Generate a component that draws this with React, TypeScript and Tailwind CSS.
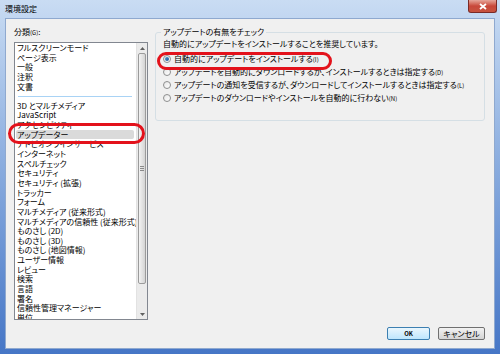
import React from "react";

const categories = [
  "フルスクリーンモード",
  "ページ表示",
  "一般",
  "注釈",
  "文書",
  "---",
  "3D とマルチメディア",
  "JavaScript",
  "アクセシビリティ",
  "アップデーター",
  "アドビオンラインサービス",
  "インターネット",
  "スペルチェック",
  "セキュリティ",
  "セキュリティ (拡張)",
  "トラッカー",
  "フォーム",
  "マルチメディア (従来形式)",
  "マルチメディアの信頼性 (従来形式)",
  "ものさし (2D)",
  "ものさし (3D)",
  "ものさし (地図情報)",
  "ユーザー情報",
  "レビュー",
  "検索",
  "言語",
  "署名",
  "信頼性管理マネージャー",
  "単位",
];

const options = [
  { label: "自動的にアップデートをインストールする", key: "(I)", checked: true },
  { label: "アップデートを自動的にダウンロードするが、インストールするときは指定する", key: "(D)" },
  { label: "アップデートの通知を受信するが、ダウンロードしてインストールするときは指定する", key: "(L)" },
  { label: "アップデートのダウンロードやインストールを自動的に行わない", key: "(N)" },
];

function Radio({ checked }: { checked?: boolean }) {
  return (
    <span className="w-[8px] h-[8px] shrink-0 rounded-full border border-[#8e8f8f] bg-gradient-to-br from-[#e6e6e6] to-[#ffffff] flex items-center justify-center">
      {checked && <span className="w-[4px] h-[4px] rounded-full bg-gradient-to-br from-[#4c9ad6] to-[#1c4f8c]" />}
    </span>
  );
}

function Scrollbar() {
  return (
    <div className="w-[11px] h-full shrink-0 flex flex-col bg-[#ebebeb] border-l border-[#e2e2e2]">
      <div className="h-[10px] flex items-center justify-center">
        <svg width="5" height="3" viewBox="0 0 5 3">
          <path d="M0 3 L2.5 0 L5 3 Z" fill="#606060" />
        </svg>
      </div>
      <div className="mx-[1px] h-[231px] rounded-[2px] border border-[#9b9b9b] bg-gradient-to-r from-[#f3f3f3] to-[#d4d4d4] flex items-center justify-center">
        <div className="flex flex-col gap-[1px]">
          <span className="w-[4px] h-[1px] bg-[#8a8a8a]" />
          <span className="w-[4px] h-[1px] bg-[#8a8a8a]" />
          <span className="w-[4px] h-[1px] bg-[#8a8a8a]" />
        </div>
      </div>
      <div className="flex-1" />
      <div className="h-[10px] flex items-center justify-center">
        <svg width="5" height="3" viewBox="0 0 5 3">
          <path d="M0 0 L2.5 3 L5 0 Z" fill="#606060" />
        </svg>
      </div>
    </div>
  );
}

export default function App() {
  return (
    <div className="relative w-[500px] h-[354px] overflow-hidden flex flex-col bg-gradient-to-b from-[#c9dcf3] via-[#86a9dd] to-[#4676c6] text-black font-['Noto_Sans_CJK_JP','Noto_Sans',sans-serif] [font-feature-settings:'palt'] text-[8px]">
      {/* title bar */}
      <div className="h-[18px] flex justify-between shrink-0">
        <span className="pl-[5px] leading-[18px] text-[8px]">環境設定</span>
        <div className="mr-[3px] w-[29px] h-[13px] rounded-b-[3px] border border-t-0 border-[#7a2a26] bg-gradient-to-b from-[#e5a59a] via-[#c8473a] to-[#c7533f] flex items-center justify-center">
          <svg width="8" height="7" viewBox="0 0 8 7">
            <path d="M1 1 L7 6 M7 1 L1 6" stroke="#ffffff" strokeWidth="1.8" />
          </svg>
        </div>
      </div>

      {/* client area */}
      <div className="flex-1 mx-[5px] mb-[5px] bg-[#f0f0f0] border border-[#8fa9cf] flex flex-col pl-[8px] pr-[9px]">
        <div className="flex items-start gap-[7px]">
          {/* category list */}
          <div className="w-[134px] flex flex-col">
            <span className="pt-[7px] leading-[12px]">
              分類<span className="text-[6px]">(G)</span>:
            </span>
            <div className="mt-[3px] h-[278px] border border-[#828790] bg-white flex overflow-hidden">
              <div className="flex-1 flex flex-col pl-[1px] pr-[2px] overflow-hidden">
                {categories.map((c, i) =>
                  c === "---" ? (
                    <div key={i} className="h-[9.65px] shrink-0 flex items-center px-[2px]">
                      <span className="w-full h-[1px] bg-[#a9d3f5]" />
                    </div>
                  ) : (
                    <div
                      key={i}
                      className={`h-[9.65px] shrink-0 leading-[9.65px] px-[1px] whitespace-nowrap ${
                        c === "アップデーター" ? "bg-[#dadada] rounded-[2px]" : ""
                      }`}
                    >
                      {c}
                    </div>
                  )
                )}
              </div>
              <Scrollbar />
            </div>
          </div>

          {/* update group */}
          <fieldset className="mt-[7px] w-[330px] h-[95px] border border-[#d5dfe5] rounded-[3px] px-[7px]">
            <legend className="px-[2px] -ml-[2px] leading-[12px]">アップデートの有無をチェック</legend>
            <div className="leading-[12px]">自動的にアップデートをインストールすることを推奨しています。</div>
            <div className="mt-[2px] flex flex-col">
              {options.map((o) => (
                <div key={o.key} className="h-[13px] flex items-center gap-[3px] whitespace-nowrap">
                  <Radio checked={o.checked} />
                  <span>
                    {o.label}
                    <span className="text-[6px]">{o.key}</span>
                  </span>
                </div>
              ))}
            </div>
          </fieldset>
        </div>

        <div className="mt-auto mb-[8px] flex justify-end gap-[8px]">
          <button className="w-[43px] h-[13px] rounded-[2px] border border-[#3c7fb1] bg-gradient-to-b from-[#eaf6fd] to-[#bee6fd] text-[6px] font-bold leading-none">
            OK
          </button>
          <button className="w-[47px] h-[13px] rounded-[2px] border border-[#707070] bg-gradient-to-b from-[#f2f2f2] to-[#d4d4d4] text-[8px] leading-none">
            キャンセル
          </button>
        </div>
      </div>

      {/* red highlight marks */}
      <div className="absolute left-[8px] top-[123px] w-[137px] h-[21px] rounded-full border-[3px] border-[#e3121b]" />
      <div className="absolute left-[157px] top-[52px] w-[175px] h-[18px] rounded-full border-[3px] border-[#e3121b]" />
    </div>
  );
}
